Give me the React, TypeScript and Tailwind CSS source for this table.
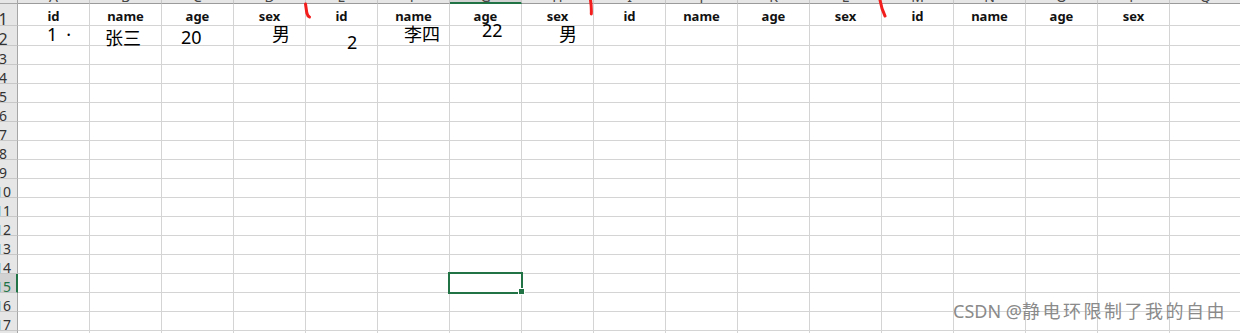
import React from "react";

// ─── Sheet data ───────────────────────────────────────────────────────────────

const COLS = ["A", "B", "C", "D", "E", "F", "G", "H", "I", "J", "K", "L", "M", "N", "O", "P", "Q"];
const HEAD = ["id", "name", "age", "sex"];
const ROW_COUNT = 18;
const SEL_COL = 6; // G
const SEL_ROW = 15;

// row 2 was typed in by hand, every value sits a little off
const ROW2: Record<number, { text: React.ReactNode; cls: string }> = {
  0: { text: <>1<span className="ml-[9px]">·</span></>, cls: "pl-[29px] -mt-[1px]" },
  1: { text: "张三", cls: "pl-[15px] mt-[3px]" },
  2: { text: "20", cls: "pl-[19px] mt-[2px]" },
  3: { text: "男", cls: "pl-[38px] -mt-[1px]" },
  4: { text: "2", cls: "pl-[41px] mt-[7px]" },
  5: { text: "李四", cls: "pl-[26px] -mt-[1px]" },
  6: { text: "22", cls: "pl-[32px] -mt-[5px]" },
  7: { text: "男", cls: "pl-[37px] -mt-[1px]" },
};

function rowHeight(r: number) {
  if (r === 1) return "h-[22px]";
  if (r === 2) return "h-[20px]";
  return "h-[19px]";
}

// ─── Pieces ───────────────────────────────────────────────────────────────────

function RowHeader({ n }: { n: number }) {
  const sel = n === SEL_ROW;
  return (
    <div
      className={`w-[18px] shrink-0 overflow-hidden flex items-end border-b border-b-[#c8c8c8] ${
        sel ? "bg-[#d2d2d2] border-r-2 border-r-[#217346] text-[#217346]" : "bg-[#e6e6e6] border-r border-r-[#a6a6a6] text-[#333]"
      }`}
    >
      <div className={`w-[24px] shrink-0 -ml-[9px] text-center leading-none -mb-[2px] ${n <= 2 ? "text-[16px]" : "text-[14px]"}`}>
        {n}
      </div>
    </div>
  );
}

function Cell({ row, col }: { row: number; col: number }) {
  const base = "w-[72px] shrink-0 border-r border-b border-[#d4d4d4] relative";

  // four id/name/age/sex blocks, A..P; Q stays empty
  if (row === 1 && col < 16) {
    return (
      <div className={`${base} flex items-end justify-center pb-[2px]`}>
        <span className="text-[13px] font-bold leading-none text-[#111]">{HEAD[col % 4]}</span>
      </div>
    );
  }

  if (row === 2 && ROW2[col]) {
    const e = ROW2[col];
    return (
      <div className={base}>
        <div className={`relative z-10 text-[18px] leading-none text-black whitespace-nowrap ${e.cls}`}>{e.text}</div>
      </div>
    );
  }

  if (row === SEL_ROW && col === SEL_COL) {
    return (
      <div className={base}>
        <div className="absolute -left-[2px] -top-[2px] w-[75px] h-[22px] border-2 border-[#217346] z-10" />
        <div className="absolute left-[68px] top-[14px] w-[7px] h-[7px] bg-[#217346] border border-white z-10" />
      </div>
    );
  }

  return <div className={base} />;
}

// hand-drawn red strokes on the screenshot
function Marks() {
  return (
    <svg className="absolute inset-0 pointer-events-none z-20" width={1240} height={333} viewBox="0 0 1240 333">
      <g fill="none" stroke="#f21d1d" strokeWidth={3} strokeLinecap="round">
        <path d="M305.5 4 L306.8 13 Q307.6 16 309.5 17" />
        <path d="M590.5 0 Q591.6 7 591.3 14" />
        <path d="M880 0 Q881.5 9 885 16" />
      </g>
    </svg>
  );
}

// ─── Page ─────────────────────────────────────────────────────────────────────

export default function App() {
  const rows = Array.from({ length: ROW_COUNT }, (_, i) => i + 1);

  return (
    <div className="relative w-[1240px] h-[333px] overflow-hidden bg-white font-['Noto_Sans','Noto_Sans_CJK_SC',sans-serif]">
      {/* column letters, cut off at the top edge */}
      <div className="flex h-[4px]">
        <div className="w-[18px] shrink-0 bg-[#e6e6e6] border-r border-b border-[#a6a6a6]" />
        {COLS.map((c, i) => (
          <div
            key={c}
            className={`w-[72px] shrink-0 overflow-hidden flex justify-center border-r border-r-[#c8c8c8] ${
              i === SEL_COL ? "bg-[#d2d2d2] border-b-2 border-b-[#217346]" : "bg-[#e6e6e6] border-b border-b-[#9b9b9b]"
            }`}
          >
            <span className="block text-[14px] leading-none -mt-[10px] text-[#444]">{c}</span>
          </div>
        ))}
      </div>

      {rows.map((r) => (
        <div key={r} className={`flex ${rowHeight(r)}`}>
          <RowHeader n={r} />
          {COLS.map((c, i) => (
            <Cell key={c} row={r} col={i} />
          ))}
        </div>
      ))}

      <Marks />

      {/* watermark */}
      <div className="absolute right-[13px] top-[302px] z-20 text-[18px] leading-none whitespace-nowrap text-[#8a8a8a]">
        CSDN @<span className="tracking-[2.5px]">静电环限制了我的自由</span>
      </div>
    </div>
  );
}
